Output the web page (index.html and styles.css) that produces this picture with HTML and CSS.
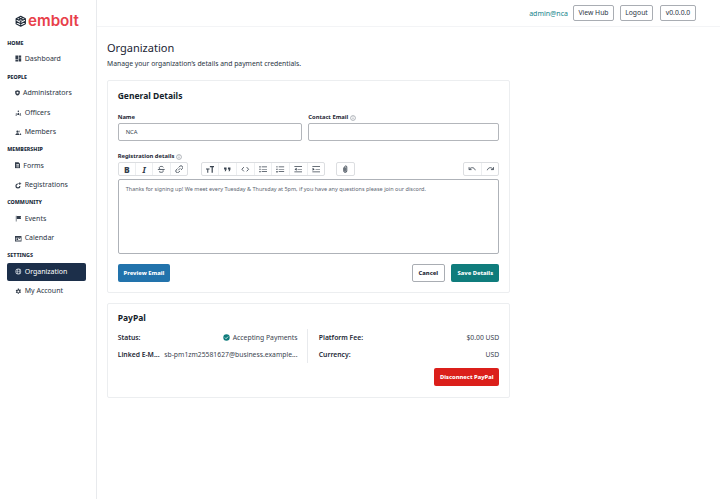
FILE: index.html
```html
<!DOCTYPE html>
<html lang="en">
<head>
<meta charset="utf-8">
<title>Organization</title>
<link rel="stylesheet" href="styles.css">
</head>
<body>
<svg class="defs" width="0" height="0" aria-hidden="true">
  <symbol id="i-dash" viewBox="0 0 16 16"><path d="M1 1h6.500v8H1zM8.800 1H15v5H8.800zM8.800 7.500H15V15H8.800zM1 10.500h6.500V15H1z"/></symbol>
  <symbol id="i-shield" viewBox="1 1 14 15"><path fill-rule="evenodd" d="M8 1l6.500 2.200v4.400c0 3.800-2.600 6.600-6.500 8-3.900-1.400-6.500-4.200-6.500-8V3.200zM8 4.800a2.800 2.800 0 100 5.600 2.800 2.800 0 000-5.600z"/></symbol>
  <symbol id="i-officer" viewBox="0 0 16 16"><path d="M8 3.500a1.800 1.800 0 110 3.600 1.800 1.800 0 010-3.600zM5.500 14c0-3 1-5.500 2.500-5.500s2.500 2.500 2.500 5.500zM3 9.500a1.300 1.300 0 110 2.600 1.300 1.300 0 010-2.600zM1 15c0-1.500.8-2.500 2-2.500s2 1 2 2.500zM13 9.500a1.300 1.300 0 110 2.600 1.300 1.300 0 010-2.600zM11 15c0-1.500.8-2.500 2-2.500s2 1 2 2.500z"/></symbol>
  <symbol id="i-members" viewBox="0 0 16 16"><path d="M6 3a2.800 2.800 0 110 5.600A2.800 2.800 0 016 3zM1 14c0-2.800 2.200-4.300 5-4.300s5 1.500 5 4.300zM10.500 3.500a2.400 2.400 0 010 4.600c.6-1.400.6-3.200 0-4.600zM12 10c1.800.4 3 1.800 3 4h-2.800c0-1.500-.2-2.800-.2-4z"/></symbol>
  <symbol id="i-forms" viewBox="2 1 12 14"><path fill-rule="evenodd" d="M2 1h8l4 4v10H2zM5 6v1.200h6V6zM5 8.800V10h6V8.800zM5 11.500v1.200h6v-1.200z"/></symbol>
  <symbol id="i-reg" viewBox="0 0 16 16"><path fill-rule="evenodd" d="M7 3a6 6 0 106 6h-2.800A3.200 3.200 0 117 5.800zM10.500 0h2v2.500H15v2h-2.500V7h-2V4.500H8v-2h2.500z"/></symbol>
  <symbol id="i-flag" viewBox="0 0 16 16"><path d="M2 1.500h1.500V15H2zM4.500 2h10l-1 3.500 1 3.500h-10z"/></symbol>
  <symbol id="i-cal" viewBox="0 0 16 16"><path fill-rule="evenodd" d="M0 2h16v13H0zM2 6v7h12V6zM3.500 7.500h4v4h-4zM9 7.500h3.500V9H9z"/></symbol>
  <symbol id="i-globe" viewBox="0 0 16 16"><path fill-rule="evenodd" d="M8 1a7 7 0 110 14A7 7 0 018 1zM2.600 7.300h2.300c0-1.500.3-2.900.8-3.900a5.600 5.600 0 00-3.100 3.900zm3.700 0h3.400C9.600 5.200 8.900 3.200 8 2.800c-.9.400-1.600 2.400-1.700 4.500zm4.800 0h2.300a5.600 5.600 0 00-3.100-3.900c.5 1 .8 2.400.8 3.900zM2.600 8.700a5.600 5.600 0 003.100 3.900c-.5-1-.8-2.400-.8-3.900zm3.700 0c.1 2.100.8 4.100 1.700 4.500.9-.4 1.600-2.400 1.700-4.500zm4.800 0c0 1.500-.3 2.900-.8 3.900a5.600 5.600 0 003.100-3.900z"/></symbol>
  <symbol id="i-gear" viewBox="0 0 16 16"><path fill-rule="evenodd" d="M6.700 1h2.600l.4 2 1.300.7 1.900-.8 1.300 2.300-1.500 1.300v1.500l1.500 1.300-1.300 2.300-1.900-.8-1.300.7-.4 2H6.700l-.4-2-1.300-.7-1.900.8-1.300-2.300L3.300 8.700V7.200L1.800 5.900l1.300-2.300 1.900.8 1.300-.7zM8 5.700a2.300 2.300 0 100 4.600 2.300 2.300 0 000-4.600z"/></symbol>
  <symbol id="i-info" viewBox="0 0 16 16"><circle cx="8" cy="8" r="6.500" fill="none" stroke="currentColor" stroke-width="1.200"/><path d="M7.300 7h1.400v4.500H7.300zM7.300 4.300h1.400v1.500H7.300z"/></symbol>
</svg>

<div class="app">
  <aside class="sidebar">
    <div class="logo">
      <svg class="logo-mark" viewBox="0 0 16 16" aria-hidden="true"><path d="M8 1l6.500 3.500v7L8 15l-6.500-3.500v-7zM1.500 4.500L8 8l6.500-3.500M1.500 8L8 11.500 14.500 8M8 8v7M4.800 2.800L11.200 6.200M11.200 2.800L4.800 6.200" fill="none" stroke="#1f2a37" stroke-width="1.400" stroke-linejoin="round"/></svg>
      <span class="logo-text">embolt</span>
    </div>
    <nav class="nav">
      <div class="nav-head nav-head-first">HOME</div>
      <a class="nav-item nav-item-first"><svg class="nav-ic"><use href="#i-dash"/></svg>Dashboard</a>
      <div class="nav-head">PEOPLE</div>
      <a class="nav-item"><svg class="nav-ic nav-ic-shield"><use href="#i-shield"/></svg>Administrators</a>
      <a class="nav-item"><svg class="nav-ic"><use href="#i-officer"/></svg>Officers</a>
      <a class="nav-item"><svg class="nav-ic"><use href="#i-members"/></svg>Members</a>
      <div class="nav-head">MEMBERSHIP</div>
      <a class="nav-item"><svg class="nav-ic nav-ic-forms"><use href="#i-forms"/></svg>Forms</a>
      <a class="nav-item"><svg class="nav-ic"><use href="#i-reg"/></svg>Registrations</a>
      <div class="nav-head">COMMUNITY</div>
      <a class="nav-item"><svg class="nav-ic"><use href="#i-flag"/></svg>Events</a>
      <a class="nav-item"><svg class="nav-ic"><use href="#i-cal"/></svg>Calendar</a>
      <div class="nav-head">SETTINGS</div>
      <a class="nav-item active"><svg class="nav-ic"><use href="#i-globe"/></svg>Organization</a>
      <a class="nav-item"><svg class="nav-ic"><use href="#i-gear"/></svg>My Account</a>
    </nav>
  </aside>

  <div class="content">
    <header class="topbar">
      <span class="user">admin@nca</span>
      <button class="top-btn top-btn-hub">View Hub</button>
      <button class="top-btn top-btn-logout">Logout</button>
      <button class="top-btn top-btn-version">v0.0.0.0</button>
    </header>

    <main class="main">
      <h1 class="title">Organization</h1>
      <p class="subtitle">Manage your organization’s details and payment credentials.</p>

      <section class="card card-general">
        <h2 class="card-title">General Details</h2>
        <div class="fields">
          <div class="field">
            <label class="label">Name</label>
            <div class="input">NCA</div>
          </div>
          <div class="field">
            <label class="label">Contact Email <svg class="info"><use href="#i-info"/></svg></label>
            <div class="input"></div>
          </div>
        </div>

        <label class="label label-reg">Registration details <svg class="info"><use href="#i-info"/></svg></label>
        <div class="toolbar">
          <div class="tgroup tg-text">
            <span class="tbtn t-b">B</span>
            <span class="tbtn t-i">I</span>
            <span class="tbtn"><svg class="tic" viewBox="0 0 12 12"><path d="M9 3.200C8.500 2.300 7.400 2 6 2 4.400 2 3.200 2.700 3.200 4c0 .8.500 1.400 1.300 1.800M1.200 6.300h9.600M8.500 7.500c.3.300.4.700.4 1 0 1.300-1.300 1.800-2.900 1.800-1.500 0-2.700-.4-3.200-1.400" fill="none" stroke="currentColor" stroke-width="1.200"/></svg></span>
            <span class="tbtn"><svg class="tic" viewBox="0 0 12 12"><path d="M4.500 7.500l3-3M5 3.500L6.800 1.800a2.300 2.300 0 013.400 3.400L8.500 7M7 8.500L5.200 10.200a2.300 2.300 0 01-3.400-3.400L3.500 5" fill="none" stroke="currentColor" stroke-width="1.200"/></svg></span>
          </div>
          <div class="tgroup tg-block">
            <span class="tbtn"><svg class="tic" viewBox="0 0 12 12"><path d="M5.500 1.500H12v1.700H9.600V11H7.900V3.200H5.500zM0 5h5v1.300H3.200V11H1.800V6.300H0z"/></svg></span>
            <span class="tbtn"><svg class="tic" viewBox="0 0 12 12"><path d="M1.500 3.500h3.500v2.800L3.800 8.800H2.300l1-2.500H1.500zM7 3.500h3.500v2.800L9.300 8.800H7.800l1-2.500H7z"/></svg></span>
            <span class="tbtn"><svg class="tic" viewBox="0 0 12 12"><path d="M4 3L1.300 6 4 9M8 3l2.700 3L8 9" fill="none" stroke="currentColor" stroke-width="1.200"/></svg></span>
            <span class="tbtn"><svg class="tic" viewBox="0 0 12 12"><path d="M.5 1.800h1.800v1.600H.5zM.5 5.200h1.800v1.600H.5zM.5 8.600h1.800v1.600H.5zM3.800 2.100h7.700v1H3.800zM3.800 5.500h7.700v1H3.800zM3.800 8.900h7.700v1H3.800z"/></svg></span>
            <span class="tbtn"><svg class="tic" viewBox="0 0 12 12"><path d="M.8 1.500h1.100v2.200H.8zM.5 5.200h1.800v.7H1.200v.4h1.100v.8H.5zM.5 8.500h1.800v2H.5zM3.800 2.100h7.700v1H3.800zM3.800 5.500h7.700v1H3.800zM3.800 8.900h7.700v1H3.800z"/></svg></span>
            <span class="tbtn"><svg class="tic" viewBox="0 0 12 12"><path d="M.5 1.800h11v1H.5zM5 5.500h6.500v1H5zM.5 9.200h11v1H.5zM3.800 3.800L.8 6l3 2.200z"/></svg></span>
            <span class="tbtn"><svg class="tic" viewBox="0 0 12 12"><path d="M.5 1.800h11v1H.5zM5 5.500h6.500v1H5zM.5 9.200h11v1H.5zM.8 3.800L3.800 6l-3 2.200z"/></svg></span>
          </div>
          <div class="tgroup tg-attach">
            <span class="tbtn"><svg class="tic" viewBox="0 0 12 12"><path d="M3.800 3.500v4.800a2.200 2.200 0 004.400 0V2.800a1.500 1.500 0 00-3 0v5.500a.7.7 0 001.400 0V3.500" fill="none" stroke="currentColor" stroke-width="1.200"/></svg></span>
          </div>
          <div class="tgroup tg-history">
            <span class="tbtn"><svg class="tic" viewBox="0 0 12 12"><path d="M1.500 3v3.500H5M1.800 6.300C3 4.500 4.500 3.800 6 3.800c2 0 3.600 1.400 4.200 3.600" fill="none" stroke="currentColor" stroke-width="1.200"/></svg></span>
            <span class="tbtn"><svg class="tic" viewBox="0 0 12 12"><path d="M10.500 3v3.500H7M10.200 6.300C9 4.500 7.500 3.800 6 3.800c-2 0-3.600 1.400-4.200 3.600" fill="none" stroke="currentColor" stroke-width="1.200"/></svg></span>
          </div>
        </div>
        <div class="editor">Thanks for signing up! We meet every Tuesday &amp; Thursday at 5pm, if you have any questions please join our discord.</div>
        <div class="actions">
          <button class="btn btn-blue">Preview Email</button>
          <div class="actions-right">
            <button class="btn btn-white">Cancel</button>
            <button class="btn btn-teal">Save Details</button>
          </div>
        </div>
      </section>

      <section class="card card-paypal">
        <h2 class="card-title">PayPal</h2>
        <div class="pp-grid">
          <div class="pp-col pp-col-left">
            <div class="pp-row">
              <span class="pp-key">Status:</span>
              <span class="pp-val pp-status"><svg class="check" viewBox="0 0 12 12"><circle cx="6" cy="6" r="5.500" fill="#0f7c7c"/><path d="M3.300 6.100l1.900 1.900 3.500-3.600" fill="none" stroke="#fff" stroke-width="1.400"/></svg>Accepting Payments</span>
            </div>
            <div class="pp-row">
              <span class="pp-key">Linked E-M...</span>
              <span class="pp-val">sb-pm1zm25581627@business.example...</span>
            </div>
          </div>
          <div class="pp-col">
            <div class="pp-row">
              <span class="pp-key">Platform Fee:</span>
              <span class="pp-val">$0.00 USD</span>
            </div>
            <div class="pp-row">
              <span class="pp-key">Currency:</span>
              <span class="pp-val">USD</span>
            </div>
          </div>
        </div>
        <div class="pp-actions"><button class="btn btn-red">Disconnect PayPal</button></div>
      </section>
    </main>
  </div>
</div>
</body>
</html>
```

FILE: styles.css
```css
* { box-sizing: border-box; }
html, body { margin: 0; padding: 0; height: 100%; }
body {
  font-family: "Noto Sans", "Open Sans", sans-serif;
  color: #1a2433;
  background: #fff;
  overflow: hidden;
}
.defs { position: absolute; }
button { font-family: inherit; cursor: pointer; }

.app { display: flex; height: 499px; }

.sidebar {
  width: 97px;
  flex: none;
  border-right: 1px solid #e8eaed;
  padding: 0 10px 0 7.300px;
}
.logo {
  display: flex;
  align-items: center;
  gap: 1.500px;
  height: 38.500px;
  padding: 3px 0 0 7.700px;
}
.logo-mark { width: 11.500px; height: 12.500px; flex: none; }
.logo-text {
  font-family: "Inter", "Liberation Sans", sans-serif;
  font-size: 15.200px;
  font-weight: 600;
  line-height: 18px;
  color: #e8404a;
}
.nav { display: flex; flex-direction: column; }
.nav-head {
  font-size: 5.300px;
  font-weight: 800;
  line-height: 8px;
  height: 8px;
  color: #202b3a;
  margin-top: 2.600px;
  margin-bottom: 3.400px;
}
.nav-head-first { margin-top: 0; margin-bottom: 3px; }
.nav-item {
  display: flex;
  align-items: center;
  gap: 3px;
  height: 18px;
  margin-bottom: 1.500px;
  padding-left: 7.700px;
  border-radius: 2px;
  font-size: 7px;
  color: #2a3443;
  line-height: 18px;
}
.nav-item-first { margin-bottom: 2.700px; }
.nav-ic { width: 6.700px; height: 7px; fill: #333d4b; flex: none; }
.nav-ic-shield { width: 5px; height: 6px; }
.nav-ic-forms { width: 5.300px; height: 6.500px; }
.nav-item.active { background: #1c2f4a; color: #fff; }
.nav-item.active .nav-ic { fill: #c9d1da; }

.content { flex: 1; min-width: 0; display: flex; flex-direction: column; }
.topbar {
  height: 27px;
  display: flex;
  justify-content: flex-end;
  align-items: center;
  padding: 0 24px 0 0;
  border-bottom: 1px solid #f3f4f6;
}
.user { font-size: 7px; color: #14838a; margin-right: 5px; }
.top-btn {
  height: 16px;
  padding: 0;
  background: #fff;
  border: 1px solid #a9adb3;
  border-radius: 2px;
  font-size: 6.800px;
  line-height: 14px;
  color: #2a3443;
}
.top-btn-hub { width: 41px; margin-right: 6px; }
.top-btn-logout { width: 33px; margin-right: 7px; }
.top-btn-version { width: 36px; }

.main { padding: 13px 0 0 10px; width: 413px; }
.title {
  margin: 0;
  font-size: 11px;
  font-weight: 400;
  line-height: 16px;
  color: #1a2433;
}
.subtitle {
  margin: 3px 0 0;
  font-size: 6.800px;
  line-height: 10px;
  color: #2a3443;
}

.card {
  background: #fff;
  border: 1px solid #eceef0;
  border-radius: 2px;
  padding: 0 9.700px;
}
.card-general { margin-top: 11px; height: 213px; padding-top: 9px; }
.card-paypal { margin-top: 10px; height: 95px; padding-top: 8px; }
.card-title {
  margin: 0;
  font-size: 8.500px;
  font-weight: 700;
  line-height: 12px;
  color: #151e2b;
}

.fields { display: flex; gap: 6.600px; margin-top: 11px; }
.field { flex: none; width: 184px; }
.field + .field { width: 191px; }
.label {
  display: flex;
  align-items: center;
  gap: 1px;
  font-size: 5.800px;
  font-weight: 700;
  line-height: 9px;
  height: 9px;
  color: #1d2735;
}
.info { width: 6px; height: 6px; fill: #5b6470; color: #5b6470; margin-left: 1px; }
.input {
  margin-top: 1px;
  height: 18px;
  border: 1px solid #b3b6bb;
  border-radius: 2px;
  padding: 0 7px;
  font-size: 5.800px;
  line-height: 16px;
  color: #333d4b;
}
.label-reg { margin-top: 11px; }

.toolbar { display: flex; margin-top: 1px; width: 381.600px; }
.tgroup {
  display: flex;
  height: 14px;
  border: 1px solid #dcdee1;
  border-radius: 2px;
  background: #fff;
}
.tg-text { width: 70.500px; }
.tg-block { width: 124.500px; margin-left: 12.500px; }
.tg-attach { width: 18.500px; margin-left: 11px; }
.tg-history { width: 36px; margin-left: auto; }
.tbtn {
  flex: 1;
  height: 12px;
  display: flex;
  align-items: center;
  justify-content: center;
  font-size: 8.500px;
  color: #333d4b;
  border-right: 1px solid #eceef0;
}
.tbtn:last-child { border-right: 0; }
.t-b { font-weight: 800; }
.t-i { font-style: italic; font-weight: 700; }
.tic { width: 8.500px; height: 8.500px; fill: #39434f; color: #39434f; }

.editor {
  margin-top: 3px;
  width: 381.600px;
  height: 75px;
  border: 1px solid #aeb2b8;
  border-radius: 2px;
  padding: 5px 7px;
  font-size: 5.500px;
  line-height: 8px;
  color: #5c6571;
}

.actions {
  display: flex;
  justify-content: space-between;
  margin-top: 10px;
  width: 381.600px;
}
.actions-right { display: flex; gap: 6.300px; }
.btn {
  height: 18px;
  border-radius: 2px;
  border: 0;
  font-size: 5.800px;
  font-weight: 800;
  padding: 0;
  color: #fff;
  white-space: nowrap;
}
.btn-blue { background: #2273ac; width: 52.600px; }
.btn-teal { background: #0f7c7c; width: 48px; }
.btn-white { background: #fff; border: 1px solid #a9adb3; color: #1d2735; width: 33.300px; }
.btn-red { background: #db1f1a; width: 65px; }

.pp-grid { display: flex; margin-top: 5px; width: 381.600px; }
.pp-col { width: 190.800px; padding-left: 10.300px; }
.pp-col-left { padding: 0 10px 0 0; border-right: 1px solid #e8eaed; height: 34px; }
.pp-row {
  display: flex;
  justify-content: space-between;
  gap: 3px;
  height: 17px;
  align-items: center;
  font-size: 6.800px;
  white-space: nowrap;
}
.pp-key { font-weight: 600; color: #1d2735; flex: none; }
.pp-val { color: #39434f; }
.pp-status { display: flex; align-items: center; gap: 3px; }
.check { width: 7px; height: 7px; }
.pp-actions { display: flex; justify-content: flex-end; margin-top: 5px; width: 381.600px; }
```
